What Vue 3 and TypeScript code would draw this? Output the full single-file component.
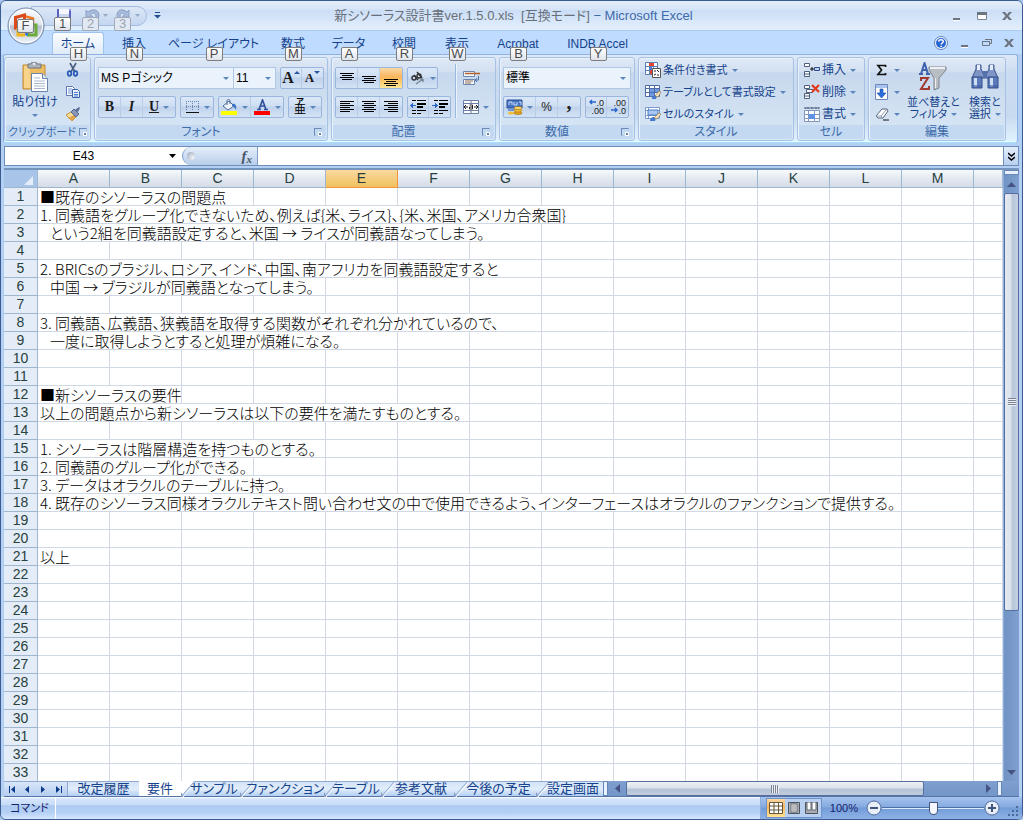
<script setup lang="ts">
import { ref } from 'vue'

interface RibbonTab { label: string; key: string }
interface SheetRow { text: string; span: number }

const ribbonTabs: RibbonTab[] = [
  { label: 'ホーム', key: 'H' },
  { label: '挿入', key: 'N' },
  { label: 'ページ レイアウト', key: 'P' },
  { label: '数式', key: 'M' },
  { label: 'データ', key: 'A' },
  { label: '校閲', key: 'R' },
  { label: '表示', key: 'W' },
  { label: 'Acrobat', key: 'B' },
  { label: 'INDB Accel', key: 'Y' },
]
const activeTab = ref('ホーム')

const columns = ['A', 'B', 'C', 'D', 'E', 'F', 'G', 'H', 'I', 'J', 'K', 'L', 'M']
const selectedColumn = 'E'
const rowCount = 33

const content: Record<number, SheetRow> = {
  1: { text: '■既存のシソーラスの問題点', span: 3 },
  2: { text: '1. 同義語をグループ化できないため、例えば{米、ライス}、{米、米国、アメリカ合衆国}', span: 8 },
  3: { text: '   という2組を同義語設定すると、米国 → ライスが同義語なってしまう。', span: 7 },
  5: { text: '2. BRICsのブラジル、ロシア、インド、中国、南アフリカを同義語設定すると', span: 7 },
  6: { text: '   中国 → ブラジルが同義語となってしまう。', span: 4 },
  8: { text: '3. 同義語、広義語、狭義語を取得する関数がそれぞれ分かれているので、', span: 7 },
  9: { text: '   一度に取得しようとすると処理が煩雑になる。', span: 5 },
  12: { text: '■新シソーラスの要件', span: 2 },
  13: { text: '以上の問題点から新シソーラスは以下の要件を満たすものとする。', span: 6 },
  15: { text: '1. シソーラスは階層構造を持つものとする。', span: 4 },
  16: { text: '2. 同義語のグループ化ができる。', span: 3 },
  17: { text: '3. データはオラクルのテーブルに持つ。', span: 4 },
  18: { text: '4. 既存のシソーラス同様オラクルテキスト問い合わせ文の中で使用できるよう、インターフェースはオラクルのファンクションで提供する。', span: 12 },
  21: { text: '以上', span: 1 },
}
const blankCells = (row: number): number => columns.length + 1 - (content[row]?.span ?? 0)

const sheets = ['改定履歴', '要件', 'サンプル', 'ファンクション', 'テーブル', '参考文献', '今後の予定', '設定画面']
const activeSheet = ref('要件')

const cellName = ref('E43')
const formula = ref('')
const zoom = ref(100)

const verticalAlign = [
  { name: '上揃え', y: 3 },
  { name: '上下中央揃え', y: 6 },
  { name: '下揃え', y: 9 },
]
const horizontalAlign = [
  { name: '左揃え', anchor: 0 },
  { name: '中央揃え', anchor: 2 },
  { name: '右揃え', anchor: 4 },
]
</script>

<template>
  <div class="window">
    <header class="titlebar">
      <div class="quick">
        <button class="qbtn" aria-label="上書き保存">
          <svg width="16" height="16" viewBox="0 0 16 16"><path d="M1 1h14v14H1z" fill="#5b62c4" /><path d="M3 1h10v8H3z" fill="#f4f7ff" /><path d="M3 6h10v3H3z" fill="#c9d5ee" /><path d="M4 11h8v4H4z" fill="#31388c" /><path d="M13 1h2v2h-2z" fill="#8f96e6" /></svg>
          <kbd class="tip">1</kbd>
        </button>
        <button class="qbtn faded" aria-label="元に戻す">
          <svg width="24" height="16" viewBox="0 0 24 16"><path d="M2 2v7h7L6.500 6.500C9 4 12 5 12 8s-2 4-4 6c5-1 7-4 7-7 0-5-6-7-11-3z" fill="#a9bbda" stroke="#8aa1c8" /><path d="M19 6h5l-2.500 3z" fill="#97a8c4" /></svg>
          <kbd class="tip">2</kbd>
        </button>
        <button class="qbtn faded" aria-label="やり直し">
          <svg width="24" height="16" viewBox="0 0 24 16"><path d="M13 2v7H6l2.500-2.500C6 4 4 5 4 8s1 4 3 6C3 13 1 10 1 7c0-5 5-7 10-3z" fill="#a9bbda" stroke="#8aa1c8" /><path d="M19 6h5l-2.500 3z" fill="#97a8c4" /></svg>
          <kbd class="tip">3</kbd>
        </button>
      </div>
      <button class="customize" aria-label="クイック アクセス ツール バーのユーザー設定">
        <svg width="7" height="7" viewBox="0 0 7 7"><path d="M1 0h5v1H1zM0 3h7L3.500 6.500z" fill="#24518f" /></svg>
      </button>
      <h1 class="title">新シソーラス設計書ver.1.5.0.xls&nbsp; [互換モード] <span>− Microsoft Excel</span></h1>
      <div class="controls">
        <button aria-label="最小化"><svg width="10" height="12" viewBox="0 0 10 12"><path d="M1 8h7v2H1z" fill="#6c7480" /><path d="M1 10h7v1H1z" fill="#fff" /></svg></button>
        <button aria-label="最大化"><svg width="10" height="12" viewBox="0 0 10 12"><path d="M.500 2.500h9v7h-9z" fill="#fff" stroke="#7c8592" /><path d="M0 2h10v3H0z" fill="#6c7480" /></svg></button>
        <button aria-label="閉じる"><svg width="10" height="12" viewBox="0 0 10 12"><path d="M0 2h3l2 2.500L7 2h3L6.500 6 10 10H7L5 7.500 3 10H0l3.500-4z" fill="#6c7480" /></svg></button>
      </div>
    </header>

    <nav class="tabrow">
      <div class="tabs" role="tablist">
        <button
          v-for="tab in ribbonTabs"
          :key="tab.key"
          role="tab"
          class="tab"
          :class="{ active: tab.label === activeTab }"
          :aria-selected="tab.label === activeTab"
          @click="activeTab = tab.label"
        >
          {{ tab.label }}<kbd class="tip">{{ tab.key }}</kbd>
        </button>
      </div>
      <div class="controls doc">
        <button aria-label="ヘルプ">
          <svg width="14" height="14" viewBox="0 0 14 14"><circle cx="7" cy="7" r="6.500" fill="#f4f9ff" stroke="#6484b8" /><circle cx="7" cy="7" r="5" fill="#2867d2" /><path d="M4.700 5.600C4.700 3 9.300 3 9.300 5.500 9.300 7 7.200 7 7.200 8.600M7.200 9.800v1.300" stroke="#fff" stroke-width="1.500" fill="none" /></svg>
        </button>
        <button aria-label="ブックを最小化"><svg width="10" height="12" viewBox="0 0 10 12"><path d="M1 8h7v2H1z" fill="#6c7480" /><path d="M1 10h7v1H1z" fill="#fff" /></svg></button>
        <button aria-label="ブックを元に戻す"><svg width="10" height="12" viewBox="0 0 10 12"><path d="M3.500 2.500h6v4H8M.500 4.500h7v4h-7z" fill="none" stroke="#6c7480" /><path d="M0 4h8v1H0zM3 2h7v1H3z" fill="#6c7480" /></svg></button>
        <button aria-label="ブックを閉じる"><svg width="10" height="12" viewBox="0 0 10 12"><path d="M0 2h3l2 2.500L7 2h3L6.500 6 10 10H7L5 7.500 3 10H0l3.500-4z" fill="#6c7480" /></svg></button>
      </div>
    </nav>

    <button class="office" aria-label="Office ボタン">
      <svg width="38" height="38" viewBox="0 0 38 38">
        <defs>
          <linearGradient id="orb" x1="0" y1="0" x2="0" y2="1"><stop offset="0" stop-color="#fafcff" /><stop offset=".45" stop-color="#dfe5ee" /><stop offset=".52" stop-color="#b4bfd0" /><stop offset="1" stop-color="#f1f6fc" /></linearGradient>
        </defs>
        <circle cx="19" cy="19" r="18" fill="url(#orb)" stroke="#7387a9" />
        <circle cx="19" cy="19" r="16.500" fill="none" stroke="#fff" />
        <path d="M8.500 10.500l9-2.500v12l-9 1z" fill="none" stroke="#dc4a1c" stroke-width="3" />
        <path d="M19 9.500l7 2v9" fill="none" stroke="#ee7a28" stroke-width="2.500" />
        <path d="M11 21v7h7" fill="none" stroke="#f3b51c" stroke-width="3" />
        <path d="M21 18h8v10h-8z" fill="none" stroke="#6aab3c" stroke-width="3" />
        <path d="M18 22v6l3 1v-7z" fill="#3c78cf" />
      </svg>
      <kbd class="tip">F</kbd>
    </button>

    <section class="ribbon" aria-label="リボン">
      <div class="group clip">
        <div class="body">
          <button class="paste">
            <svg width="28" height="31" viewBox="0 0 28 31">
              <path d="M2 3h22v24H2z" fill="#eebd62" stroke="#c18b35" /><path d="M3 4h6v22H3z" fill="#f7d38b" />
              <path d="M7 2h3c0-3 6-3 6 0h4v4H7z" fill="#aeb4bd" stroke="#6f757f" /><circle cx="13" cy="2" r="1" fill="#fff" />
              <path d="M10.500 11.500h11l5 5v13h-16z" fill="#fff" stroke="#6b82ad" /><path d="M21.500 11.500v5h5" fill="#dce7f6" stroke="#6b82ad" />
              <path d="M13 16h6M13 19h11M13 21.500h11M13 24h11M13 26.500h11" stroke="#a9b8d2" />
            </svg>
            <span>貼り付け</span>
            <i class="arrow"></i>
          </button>
          <div class="stack">
            <button aria-label="切り取り"><svg width="16" height="16" viewBox="0 0 16 16"><path d="M5 1l5 9M11 1L6 10" stroke="#49607f" stroke-width="1.600" /><ellipse cx="4.500" cy="11.500" rx="1.800" ry="2.300" fill="none" stroke="#2757b5" stroke-width="1.700" /><ellipse cx="10.500" cy="11.500" rx="1.800" ry="2.300" fill="none" stroke="#2757b5" stroke-width="1.700" /></svg></button>
            <button aria-label="コピー"><svg width="16" height="16" viewBox="0 0 16 16"><path d="M1.500 2.500h6l2 2v7h-8z" fill="#fff" stroke="#5777b5" /><path d="M3 5h4M3 7h4M3 9h4" stroke="#6b94d6" /><path d="M7.500 5.500h5l2 2v6h-7z" fill="#e9f1fd" stroke="#3d61a8" /><path d="M9 8.500h4M9 10.500h4M9 12h4" stroke="#4b7dcf" /></svg></button>
            <button aria-label="書式のコピー"><svg width="16" height="16" viewBox="0 0 16 16"><path d="M1 9l5-3 5 5-4 4z" fill="#f5dd98" stroke="#c5933e" /><path d="M3 12l4 3 4-4-2-2z" fill="#e0a44c" /><path d="M6 6l3-3 5 5-3 3z" fill="#8897ba" stroke="#53668f" /><path d="M10 4l4-3 1 1-2 4z" fill="#596b95" /></svg></button>
          </div>
        </div>
        <footer>クリップボード<button class="launch" aria-label="クリップボードの表示"></button></footer>
      </div>

      <div class="group font">
        <div class="body rows">
          <div class="line">
            <div class="combos">
              <span class="combo face"><select aria-label="フォント"><option>MS Pゴシック</option></select><i class="arrow"></i></span>
              <span class="combo size"><select aria-label="フォント サイズ"><option>11</option></select><i class="arrow"></i></span>
            </div>
            <div class="btns">
              <button class="w22 serif big" aria-label="フォント サイズの拡大">A<svg width="6" height="4" viewBox="0 0 6 4"><path d="M0 3h6L3 0z" fill="#2a57a4" /></svg></button>
              <button class="w22 serif small" aria-label="フォント サイズの縮小">A<svg width="6" height="4" viewBox="0 0 6 4"><path d="M0 0h6L3 3z" fill="#2a57a4" /></svg></button>
            </div>
          </div>
          <div class="line">
            <div class="btns">
              <button class="w23 serif"><b>B</b></button>
              <button class="w23 serif"><i class="ital">I</i></button>
              <button class="w34 serif"><u>U</u><i class="arrow"></i></button>
            </div>
            <div class="btns">
              <button class="w34" aria-label="罫線"><svg width="16" height="16" viewBox="0 0 16 16"><path d="M2 2.500h13M2 7.500h13M2.500 2v10M8.500 2v10M14.500 2v10" stroke="#6883ad" stroke-dasharray="1 1" /><path d="M2 13h13v1H2z" fill="#111" /></svg><i class="arrow"></i></button>
            </div>
            <div class="btns">
              <button class="w33" aria-label="塗りつぶしの色"><svg width="17" height="16" viewBox="0 0 17 16"><path d="M2 7l6-5 5 5-6 4z" fill="#eef4fc" stroke="#526b94" /><path d="M6 6V2c0-2 3-2 3 0v3" fill="none" stroke="#526b94" /><path d="M11 5c3-1 5 1 4 6-1-2-2-3-4-4z" fill="#3b73c8" /><path d="M0 12h16v4H0z" fill="#ff0" /></svg><i class="arrow"></i></button>
              <button class="w33" aria-label="フォントの色"><svg width="17" height="16" viewBox="0 0 17 16"><path d="M3 10.500h4M10 10.500h4M5 10.500L8.500 1l3.500 9.500M6.200 7h5" fill="none" stroke="#35539c" stroke-width="1.700" /><path d="M0 12h16v4H0z" fill="#f00" /></svg><i class="arrow"></i></button>
            </div>
            <div class="btns">
              <button class="w34 ruby" aria-label="ふりがなの表示"><ruby>亜<rt>ア</rt></ruby><i class="arrow"></i></button>
            </div>
          </div>
        </div>
        <footer>フォント<button class="launch" aria-label="フォントの設定"></button></footer>
      </div>

      <div class="group align">
        <div class="body split">
          <div class="rows">
            <div class="line">
              <div class="btns">
                <button v-for="(item, i) in verticalAlign" :key="item.name" class="w23" :class="{ pressed: i === 2 }" :aria-label="item.name">
                  <svg width="14" height="16" viewBox="0 0 14 16" shape-rendering="crispEdges"><path :d="`M0 ${item.y}h14v1H0zM2 ${item.y + 2}h10v1H2zM0 ${item.y + 4}h14v1H0zM2 ${item.y + 6}h10v1H2z`" fill="#000" /></svg>
                </button>
              </div>
              <div class="btns">
                <button class="w31" aria-label="方向"><svg width="16" height="16" viewBox="0 0 16 16"><g fill="none" stroke="#333" stroke-width="1.400"><circle cx="4" cy="8" r="2" /><path d="M4 5l4 5M7 2l5 6" /><circle cx="9" cy="6" r="2" /></g><path d="M6 14l7-5M13 9h-3M13 9v3" stroke="#7b8798" stroke-width="1.400" fill="none" /></svg><i class="arrow"></i></button>
              </div>
            </div>
            <div class="line">
              <div class="btns">
                <button v-for="item in horizontalAlign" :key="item.name" class="w23" :aria-label="item.name">
                  <svg width="14" height="14" viewBox="0 0 14 14" shape-rendering="crispEdges"><path :d="`M0 1h14v1H0zM${item.anchor} 3h10v1H${item.anchor}zM0 5h14v1H0zM${item.anchor} 7h10v1H${item.anchor}zM0 9h14v1H0zM${item.anchor} 11h10v1H${item.anchor}z`" fill="#000" /></svg>
                </button>
              </div>
              <div class="btns">
                <button class="w22" aria-label="インデントを減らす"><svg width="16" height="16" viewBox="0 0 16 16" shape-rendering="crispEdges"><path d="M2 1h4v1H2zM7 1h9v1H7zM7 4h9v2H7zM7 7h6v2H7zM2 11h4v1H2zM7 11h9v1H7zM2 14h4v1H2zM7 14h4v1H7z" fill="#000" /><path d="M0 6h1V5h1V4h1v2h3v1H3v2H2V8H1V7H0z" fill="#2b65c8" /></svg></button>
                <button class="w22" aria-label="インデントを増やす"><svg width="16" height="16" viewBox="0 0 16 16" shape-rendering="crispEdges"><path d="M2 1h4v1H2zM7 1h9v1H7zM7 4h9v2H7zM7 7h6v2H7zM2 11h4v1H2zM7 11h9v1H7zM2 14h4v1H2zM7 14h4v1H7z" fill="#000" /><path d="M6 6H5V5H4V4H3v2H0v1h3v2h1V8h1V7h1z" fill="#2b65c8" /></svg></button>
              </div>
            </div>
          </div>
          <div class="rule"></div>
          <div class="rows plain">
            <button aria-label="折り返して全体を表示する"><svg width="17" height="16" viewBox="0 0 17 16"><path d="M.500 1.500h11v5H.500zM.500 9.500h11v5H.500z" fill="#f5f9ff" stroke="#7087ad" /><path d="M2 3.500h15" stroke="#b5632b" stroke-width="1.500" /><path d="M2 11h8M2 13h6" stroke="#8f6d52" /><path d="M15.500 6v4h-3M14 8l-2 2 2 2" fill="none" stroke="#4770a9" /></svg></button>
            <button aria-label="セルを結合して中央揃え"><svg width="17" height="16" viewBox="0 0 17 16"><path d="M.500 1.500h15v13H.500zM.500 4.500h15M.500 11.500h15M8 1v3M8 12v3" fill="#fff" stroke="#6a7fa5" /><path d="M1 8h4M15 8h-4M3 6L1 8l2 2M13 6l2 2-2 2" fill="none" stroke="#222" /><path d="M6.500 6h3v4h-3V8h3" fill="none" stroke="#222" /></svg><i class="arrow"></i></button>
          </div>
        </div>
        <footer>配置<button class="launch" aria-label="配置の設定"></button></footer>
      </div>

      <div class="group number">
        <div class="body rows">
          <div class="line">
            <span class="combo wide"><select aria-label="表示形式"><option>標準</option></select><i class="arrow"></i></span>
          </div>
          <div class="line">
            <div class="btns">
              <button class="w33" aria-label="通貨表示形式"><svg width="17" height="16" viewBox="0 0 17 16"><path d="M1 1h15v8H1z" fill="#4573c4" stroke="#2b4e94" /><path d="M3 6V3h3v3M8 3v3h3V3M13 3h2v3" fill="none" stroke="#cfe0fa" /><path d="M2 10h7v2H2z" fill="#6f95da" /><ellipse cx="12" cy="14" rx="4" ry="1.600" fill="#e7a51f" stroke="#9b6e13" stroke-width=".6" /><ellipse cx="12" cy="11.500" rx="4" ry="1.600" fill="#f4bc35" stroke="#9b6e13" stroke-width=".6" /><ellipse cx="12" cy="9" rx="4" ry="1.600" fill="#ffd868" stroke="#9b6e13" stroke-width=".6" /><ellipse cx="5" cy="14" rx="3" ry="1.500" fill="#f2bd3b" /></svg><i class="arrow"></i></button>
              <button class="w23 percent">%</button>
              <button class="w23 comma">,</button>
            </div>
            <div class="btns">
              <button class="w22 dec" aria-label="小数点以下の表示桁数を増やす"><span><svg width="7" height="6" viewBox="0 0 7 6"><path d="M7 3H1M3 1L1 3l2 2" stroke="#2b65c8" stroke-width="1.500" fill="none" /></svg>.0</span><span>.00</span></button>
              <button class="w22 dec" aria-label="小数点以下の表示桁数を減らす"><span>.00</span><span><svg width="7" height="6" viewBox="0 0 7 6"><path d="M0 3h6M4 1l2 2-2 2" stroke="#2b65c8" stroke-width="1.500" fill="none" /></svg>.0</span></button>
            </div>
          </div>
        </div>
        <footer>数値<button class="launch" aria-label="数値の設定"></button></footer>
      </div>

      <div class="group styles">
        <div class="body list">
          <button><svg width="16" height="16" viewBox="0 0 16 16"><path d="M.500.500h12v12H.500zM.500 4.500h12M.500 8.500h12M4.500.500v12M8.500.500v12" fill="#fff" stroke="#5c7dba" /><path d="M4 1h5v3H4zM5 8h3v4H5z" fill="#e3462c" /><path d="M4 5h3v3H4z" fill="#4a79cc" /><path d="M7.500 6.500h8v9h-8z" fill="#fff" stroke="#555" /><path d="M9 9h2M12 8l2 2M9 13l2-1M12 13h2" stroke="#222" /></svg>条件付き書式<i class="arrow"></i></button>
          <button><svg width="16" height="16" viewBox="0 0 16 16"><path d="M.500 1.500h14v11H.500zM.500 4.500h14M.500 8.500h14M4.500 1.500v11M9.500 1.500v11" fill="#fff" stroke="#4e6ba1" /><path d="M5 5h4v3H5zM10 5h4v3h-4zM5 9h4v3H5z" fill="#6f9de5" /><path d="M7 15c0-4 3-4 5-3l-1 3z" fill="#3e78d1" /><path d="M10 12l4-5 2 1-3 5z" fill="#f7e5bd" stroke="#866a3b" stroke-width=".6" /></svg>テーブルとして書式設定<i class="arrow"></i></button>
          <button><svg width="16" height="16" viewBox="0 0 16 16"><path d="M.500 1.500h14v11H.500zM.500 4.500h14M.500 9.500h14M3.500 1.500v11" fill="#fff" stroke="#7b99ce" /><path d="M3 4h10v5H3z" fill="#a9c7f4" stroke="#4b79c5" /><path d="M5 15c0-4 4-5 6-3l-1 3z" fill="#3e78d1" /><path d="M9 12l5-5 2 1-4 5z" fill="#f7e5bd" stroke="#866a3b" stroke-width=".6" /></svg>セルのスタイル<i class="arrow"></i></button>
        </div>
        <footer>スタイル</footer>
      </div>

      <div class="group cells">
        <div class="body list">
          <button><svg width="16" height="16" viewBox="0 0 16 16"><path d="M.500 1.500h5v3h-5zM.500 9.500h5v5h-5zM.500 12h5" fill="#fff" stroke="#4d5f7c" /><path d="M10.500 5.500h5v3h-5z" fill="#bcd3f6" stroke="#2f4f8c" /><path d="M6 7h4M8 5v4" stroke="#111" /></svg>挿入<i class="arrow"></i></button>
          <button><svg width="16" height="16" viewBox="0 0 16 16"><path d="M.500 1.500h5v3h-5zM.500 9.500h5v5h-5zM.500 12h5M2.500 5.500h6v3h-6z" fill="#fff" stroke="#4d5f7c" /><path d="M8 1l7 7M15 1L8 8" stroke="#e2381d" stroke-width="2.200" /></svg>削除<i class="arrow"></i></button>
          <button><svg width="16" height="16" viewBox="0 0 16 16"><path d="M1 1v2M4 1v2M8 1v2M12 1v2M15 1v2M1 2h14" stroke="#4d5f7c" /><path d="M.500 4.500h15v11H.500zM.500 8.500h15M.500 12.500h15M4.500 4.500v11M10.500 4.500v11" fill="#fff" stroke="#8098c2" /><path d="M5 8h6v5H5z" fill="#5f93e6" /></svg>書式<i class="arrow"></i></button>
        </div>
        <footer>セル</footer>
      </div>

      <div class="group edit">
        <div class="body editing">
          <div class="list">
            <button aria-label="オート SUM"><svg width="14" height="14" viewBox="0 0 14 14"><path d="M10.500 4V2.500H3L6.500 7 3 11.500h7.500V10" fill="none" stroke="#111" stroke-width="1.700" /></svg><i class="arrow"></i></button>
            <button aria-label="フィル"><svg width="14" height="16" viewBox="0 0 14 16"><path d="M.500.500h12v15H.500z" fill="#fff" stroke="#6b86b9" /><path d="M1 1h11v3H1z" fill="#a9c3ec" /><path d="M5 5h3v4h3l-4.500 5L2 9h3z" fill="#2c6cdb" stroke="#184aa5" stroke-width=".6" /></svg><i class="arrow"></i></button>
            <button aria-label="クリア"><svg width="14" height="14" viewBox="0 0 14 14"><path d="M1 9l6-7h5l1 2-5 7H3z" fill="#fff" stroke="#53617a" /><path d="M1 9h5l2 2M6 9l6-7" fill="none" stroke="#8b9bb5" /><path d="M8 13h6" stroke="#111" /></svg><i class="arrow"></i></button>
          </div>
          <button class="large">
            <svg width="30" height="30" viewBox="0 0 30 30">
              <path d="M1 12h4M8 12h4M3 12L6.500 1 10 12M4 8h5" fill="none" stroke="#3f62ae" stroke-width="2" />
              <path d="M3 19v-3h7L3 27h8v-3" fill="none" stroke="#a23a34" stroke-width="2" />
              <path d="M11 5h17v3l-7 8v10l-5 2V16l-5-8z" fill="#b9bec5" stroke="#7e858f" /><path d="M12 5h15v2H12zM17 16h1v10h-1z" fill="#eef0f3" />
            </svg>
            <span>並べ替えと</span><span>フィルタ<i class="arrow"></i></span>
          </button>
          <button class="large">
            <svg width="30" height="30" viewBox="0 0 30 30">
              <path d="M6 3h5v4l3 6h2l3-6V3h5v4l4 9H2l4-9z" fill="#7f95c5" stroke="#3f568e" /><path d="M7 3h3v5H7zM20 3h3v5h-3z" fill="#e6edfa" /><path d="M13 9h4v7h-4z" fill="#5571ab" />
              <path d="M2 15h10v11H2zM18 15h10v11H18z" fill="#5c7bbb" stroke="#334c86" /><path d="M4 16h3v9H4zM20 16h3v9h-3z" fill="#cfddf5" /><path d="M2 23h10v3H2zM18 23h10v3H18z" fill="#435f9e" fill-opacity=".6" />
            </svg>
            <span>検索と</span><span>選択<i class="arrow"></i></span>
          </button>
        </div>
        <footer>編集</footer>
      </div>
    </section>

    <div class="formulabar">
      <div class="namebox">
        <input v-model="cellName" aria-label="名前ボックス">
        <button aria-label="名前の一覧"><svg width="7" height="4" viewBox="0 0 7 4"><path d="M0 0h7L3.500 4z" fill="#000" /></svg></button>
      </div>
      <div class="fx"><span class="knob"></span><button aria-label="関数の挿入"><em>f</em><sub>x</sub></button></div>
      <input v-model="formula" class="formula" aria-label="数式バー">
      <button class="expand" aria-label="数式バーの展開"><svg width="7" height="9" viewBox="0 0 7 9"><path d="M0 1l3.500 3L7 1M0 5l3.500 3L7 5" fill="none" stroke="#000" stroke-width="1.600" /></svg></button>
    </div>

    <main class="workbook">
      <div class="sheet">
        <table>
          <colgroup><col class="rowcol"><col v-for="c in columns" :key="c" class="datacol"><col></colgroup>
          <thead>
            <tr>
              <th class="corner"><svg width="9" height="9" viewBox="0 0 9 9"><path d="M9 0v9H0z" fill="#e6eefa" /></svg></th>
              <th v-for="c in columns" :key="c" scope="col" :class="{ selected: c === selectedColumn }">{{ c }}</th>
              <th></th>
            </tr>
          </thead>
          <tbody>
            <tr v-for="row in rowCount" :key="row">
              <th scope="row">{{ row }}</th>
              <td v-if="content[row]" :colspan="content[row].span">{{ content[row].text }}</td>
              <td v-for="n in blankCells(row)" :key="n"></td>
            </tr>
          </tbody>
        </table>
      </div>
      <div class="vscroll">
        <div class="splitter"></div>
        <button aria-label="上へスクロール"><svg width="9" height="5" viewBox="0 0 9 5"><path d="M0 5h9L4.500 0z" fill="#445381" /></svg></button>
        <div class="thumb"><i></i></div>
        <div class="rest"></div>
        <button aria-label="下へスクロール"><svg width="9" height="5" viewBox="0 0 9 5"><path d="M0 0h9L4.500 5z" fill="#445381" /></svg></button>
      </div>
    </main>

    <div class="sheetbar">
      <div class="sheetnav">
        <button aria-label="最初のシート"><svg width="7" height="7" viewBox="0 0 7 7"><path d="M0 0h1v7H0zM6 0v7L2 3.500z" fill="#0c3a8a" /></svg></button>
        <button aria-label="前のシート"><svg width="7" height="7" viewBox="0 0 7 7"><path d="M5 0v7L1 3.500z" fill="#0c3a8a" /></svg></button>
        <button aria-label="次のシート"><svg width="7" height="7" viewBox="0 0 7 7"><path d="M1 0v7l4-3.500z" fill="#0c3a8a" /></svg></button>
        <button aria-label="最後のシート"><svg width="7" height="7" viewBox="0 0 7 7"><path d="M6 0h1v7H6zM1 0v7l4-3.500z" fill="#0c3a8a" /></svg></button>
      </div>
      <div class="sheettabs" role="tablist">
        <button
          v-for="(name, i) in sheets"
          :key="name"
          role="tab"
          :aria-selected="name === activeSheet"
          :class="{ active: name === activeSheet }"
          @click="activeSheet = name"
        >
          <svg v-if="i > 1" width="14" height="16" viewBox="0 0 14 16"><path v-if="i === 2" d="M0 0h13L0 15z" fill="#fff" /><path d="M0 11v5h3z" fill="#8799b8" /><path d="M1 15L13 1" stroke="#8fa9d0" /><path d="M2 16L14 2" stroke="#fff" /></svg><span>{{ name }}</span>
        </button>
      </div>
      <div class="hscroll">
        <div class="splitter"></div>
        <button aria-label="左へスクロール"><svg width="5" height="9" viewBox="0 0 5 9"><path d="M5 0v9L0 4.500z" fill="#445381" /></svg></button>
        <div class="thumb"><i></i></div>
        <div class="rest"></div>
        <button aria-label="右へスクロール"><svg width="5" height="9" viewBox="0 0 5 9"><path d="M0 0v9l5-4.500z" fill="#445381" /></svg></button>
        <div class="splitter"></div>
      </div>
    </div>

    <footer class="status">
      <span class="mode">コマンド</span>
      <div class="view">
        <div class="modes">
          <button class="pressed" aria-label="標準"><svg width="14" height="12" viewBox="0 0 14 12"><path d="M.500.500h13v11H.500zM.500 4h13M.500 8h13M5 .500v11M9.500.500v11" fill="#fff" stroke="#66583b" /></svg></button>
          <button aria-label="ページ レイアウト"><svg width="12" height="12" viewBox="0 0 12 12"><path d="M.500.500h11v11H.500z" fill="#a9adb3" stroke="#4e555f" /><path d="M3 2h6v8H3z" fill="#fff" stroke="#5e6670" /><path d="M4 4h4M4 6h4M4 8h4" stroke="#777" /></svg></button>
          <button aria-label="改ページ プレビュー"><svg width="13" height="12" viewBox="0 0 13 12"><path d="M.500.500h12v11H.500z" fill="#a9adb3" stroke="#4e555f" /><path d="M2 0h4v8H2zM7 0h4v8H7z" fill="#fff" stroke="#5e6670" /></svg></button>
        </div>
        <output class="level">{{ zoom }}%</output>
        <button class="round" aria-label="縮小" @click="zoom -= 10"><svg width="16" height="16" viewBox="0 0 16 16"><circle cx="8" cy="8" r="7" fill="#e8eff9" stroke="#506b9a" /><path d="M4 7h8v2H4z" fill="#40557c" /></svg></button>
        <input v-model.number="zoom" type="range" min="10" max="190" aria-label="ズーム">
        <button class="round" aria-label="拡大" @click="zoom += 10"><svg width="16" height="16" viewBox="0 0 16 16"><circle cx="8" cy="8" r="7" fill="#e8eff9" stroke="#506b9a" /><path d="M4 7h8v2H4zM7 4h2v8H7z" fill="#40557c" /></svg></button>
        <svg class="grip" width="11" height="11" viewBox="0 0 11 11"><path d="M8 0h2v2H8zM4 4h2v2H4zM8 4h2v2H8zM0 8h2v2H0zM4 8h2v2H4zM8 8h2v2H8z" fill="#4b6998" /></svg>
      </div>
    </footer>
  </div>
</template>

<style>
body { margin: 0; background: #a9c6ef; }
</style>

<style scoped>
.window {
  position: relative;
  box-sizing: border-box;
  display: flex;
  flex-direction: column;
  height: 100vh;
  min-width: 1010px;
  border: 1px solid #3b5c90;
  border-radius: 6px;
  overflow: hidden;
  background: #b4cff4;
  color: #15428b;
  font: 12px/14px "Liberation Sans", "Noto Sans CJK JP", sans-serif;
  font-feature-settings: "palt";
}
button, input, select { font: inherit; font-feature-settings: inherit; color: inherit; margin: 0; padding: 0; border: 0; background: none; border-radius: 0; outline: 0; box-sizing: border-box; }
button { display: flex; align-items: center; justify-content: center; white-space: nowrap; }
svg { display: block; flex: none; }
.arrow { flex: none; width: 0; height: 0; border: solid transparent; border-width: 3px 3px 0; border-top-color: #5b86bd; }
.tip {
  position: absolute;
  box-sizing: border-box;
  width: 17px;
  height: 14px;
  border: 1px solid #7d7d7d;
  border-radius: 2px;
  background: linear-gradient(#fff, #dfe4ec);
  color: #4c4c4c;
  font: 13px/12px "Liberation Sans", sans-serif;
  text-align: center;
  z-index: 3;
}

.titlebar { display: flex; flex: none; align-items: center; height: 29px; padding: 0 10px 0 30px; background: linear-gradient(#e4edf9, #d6e5f8 28%, #cbdef6 32%, #e3effd); border-bottom: 1px solid #a9cdf1; }
.quick { display: flex; gap: 16px; box-sizing: border-box; width: 116px; height: 20px; padding: 1px 0 0 24px; border: 1px solid #a5bcdc; border-radius: 0 10px 10px 0; background: linear-gradient(#dce7f6, #c4d7f0); }
.qbtn { position: relative; width: 16px; height: 16px; justify-content: flex-start; }
.qbtn .tip { left: -2px; top: 9px; }
.qbtn svg { overflow: visible; }
.faded .tip { border-color: #a4a9b2; color: #a0a4ab; background: #dfe8f4; }
.faded { left: -4px; }
.customize { width: 20px; height: 20px; }
.title { flex: 1; margin: 0; padding-right: 92px; text-align: center; font-size: 13px; line-height: 20px; font-weight: 400; color: #696f79; white-space: nowrap; }
.title span { color: #3e6aaa; }
.controls { display: flex; gap: 15px; }

.tabrow { display: flex; flex: none; justify-content: space-between; height: 23px; padding: 0 5px 0 51px; background: #bfdbff; }
.tabs { display: grid; grid-template-columns: 52px 46px 99px 46px 51px 46px 46px 62px 83px; gap: 7px; padding-top: 1px; }
.tab { position: relative; z-index: 2; border: 1px solid transparent; border-bottom: 0; border-radius: 3px 3px 0 0; }
.tab.active { background: linear-gradient(#fafdff, #dfebf9); border-color: #9ec1ee; }
.tab .tip { left: 50%; margin-left: -8px; top: 14px; }
.controls.doc { align-items: center; gap: 12px; padding-right: 3px; }

.office { position: absolute; left: 6px; top: 6px; width: 38px; height: 38px; z-index: 4; }
.office .tip { left: 10px; top: 12px; }

.ribbon { display: flex; flex: none; gap: 3px; margin: 0 4px 0 2px; padding: 2px 0 1px; border: 1px solid #8db2e3; border-radius: 3px; border-bottom-color: #a4e0fb; background: linear-gradient(#dee9f7, #cbdcf0 20%, #c8daef 70%, #e2f3ff); box-shadow: inset 0 -1px 1px #e0ffff; }
.group { display: flex; flex: none; flex-direction: column; box-sizing: border-box; border: 1px solid #a6c1e4; border-radius: 3px; background: linear-gradient(#dfe9f6, #d3e0f1 17%, #c7d8ed 18%, #d9e8f6); box-shadow: inset 1px 1px 0 #eaf2fb; }
.clip { width: 87px; }
.font { width: 234px; }
.align { width: 165px; }
.number { width: 136px; }
.styles { width: 156px; }
.cells { width: 68px; }
.edit { width: 138px; }
.body { display: flex; box-sizing: border-box; height: 67px; }
.group footer { position: relative; height: 14px; margin: 0 1px 1px; border-radius: 0 0 2px 2px; background: #c2d9f1; color: #3e6aaa; text-align: center; line-height: 14px; white-space: nowrap; }
.align footer, .number footer, .font footer { padding-right: 20px; }
.clip footer { padding-right: 11px; font-size: 11px; }
.launch { position: absolute; right: 4px; top: 3px; width: 8px; height: 8px; border: 1px solid #6a8bb8; border-right-color: #b5cbe6; border-bottom-color: #b5cbe6; }
.clip .launch { right: 2px; }
.launch::after { content: ""; width: 4px; height: 4px; margin: 3px 0 0 3px; background: #5e80b2; border: 1px solid #fff; box-sizing: border-box; flex: none; }

.paste { flex-direction: column; justify-content: flex-start; width: 60px; padding-top: 4px; }
.paste span { line-height: 16px; margin-top: 1px; }
.paste .arrow { margin-top: 4px; }
.stack { display: flex; flex-direction: column; gap: 6px; padding-top: 4px; }

.rows { display: flex; flex-direction: column; gap: 7px; }
.body.rows, .split { padding: 9px 0 0 3px; }
.split { gap: 4px; }
.line { display: flex; gap: 4px; }
.btns { display: flex; box-sizing: border-box; height: 22px; border: 1px solid #9ab6dc; border-radius: 2px; background: linear-gradient(#dae7f7, #cfdff3 45%, #bfd2eb 50%, #d3e3f5); }
.btns button { gap: 4px; border-right: 1px solid #b9cde8; }
.btns button:last-child { border-right: 0; }
.w22 { width: 21px; }
.w23 { width: 22px; }
.w31 { width: 29px; }
.w33 { width: 32px; }
.w34 { width: 32px; }
.pressed { background: linear-gradient(#fbd9a6, #f9b55c 45%, #fcbf5f 55%, #fee597); }
.combos { display: flex; border: 1px solid #b0c7e5; height: 22px; box-sizing: border-box; background: #b0c7e5; gap: 1px; }
.combo { position: relative; display: flex; background: #eaf2fb; }
.combo select { appearance: none; width: 100%; padding-left: 2px; color: #000; }
.combo .arrow { position: absolute; right: 4px; top: 9px; pointer-events: none; }
.face { width: 134px; }
.size { width: 41px; }
.wide { width: 128px; height: 22px; box-sizing: border-box; border: 1px solid #b0c7e5; }
.serif { font: bold 14px/18px "Liberation Serif", serif; color: #1a1a1a; }
.ital { font-style: italic; }
.big { font-size: 16px; }
.small { font-size: 13px; }
.btns .big, .btns .small { gap: 0; }
.big svg, .small svg { margin-bottom: 10px; }
.ruby { font-size: 12px; color: #000; }
.ruby ruby { display: flex; flex-direction: column-reverse; line-height: 11px; align-items: center; }
.ruby rt { display: block; font-size: 8px; line-height: 7px; font-weight: 700; }
.rule { width: 1px; height: 54px; margin-top: -3px; background: #9ab9df; border-right: 1px solid #eaf2fb; }
.plain { gap: 13px; padding: 3px 0 0 2px; }
.plain button { gap: 3px; width: 31px; height: 16px; justify-content: flex-start; }
.percent { color: #222; }
.comma { font: bold 20px/10px "Liberation Serif", serif; color: #222; padding-bottom: 10px; }
.btns .dec { flex-direction: column; align-items: flex-end; gap: 0; padding-right: 2px; font-size: 9px; line-height: 8px; color: #222; }
.dec span { display: flex; }

.list { display: flex; flex-direction: column; align-items: flex-start; gap: 6px; padding: 4px 0 0 6px; }
.list button { height: 16px; gap: 4px; }
.list button svg { margin-right: -2px; }
.styles .list { font-size: 11px; }
.editing { gap: 7px; }
.editing .list button { gap: 7px; width: 25px; justify-content: flex-start; }
.large { flex-direction: column; justify-content: flex-start; padding-top: 4px; min-width: 36px; line-height: 12px; font-size: 11px; }
.large svg { margin-bottom: 4px; }
.large span { display: flex; align-items: center; gap: 4px; height: 12px; }

.formulabar { display: flex; flex: none; box-sizing: border-box; height: 20px; margin: 3px 3px 0; border: 1px solid #6b8fb9; background: #fff; color: #000; }
.namebox { display: flex; width: 177px; }
.namebox input { flex: 1; min-width: 0; text-align: center; }
.namebox button { width: 20px; }
.fx { display: flex; justify-content: space-between; align-items: center; width: 76px; box-sizing: border-box; padding: 0 5px 0 4px; border: 1px solid #7f9fc9; border-width: 0 1px 0 1px; border-radius: 10px 0 0 10px; background: linear-gradient(#e6effb, #b8cdeb); }
.knob { width: 8px; height: 8px; border-radius: 4px; background: radial-gradient(circle at 6px 6px, #f4f6f9, #9ba8bb); }
.fx button { font: 15px/16px "Liberation Serif", serif; color: #4a5568; }
.fx em { font-weight: 700; }
.fx sub { font: italic bold 11px/10px "Liberation Serif", serif; align-self: flex-end; }
.formula { flex: 1; min-width: 0; }
.expand { width: 15px; border-left: 1px solid #6b8fb9; background: linear-gradient(#e3eefc, #b9cfee); }

.workbook { display: flex; flex: 1; min-height: 0; margin: 2px 3px 0; border-top: 2px solid #7695bd; overflow: hidden; }
.sheet { flex: 1; min-width: 0; overflow: hidden; background: #fff; }
table { width: 100%; table-layout: fixed; border-collapse: separate; border-spacing: 0; }
.rowcol { width: 34px; }
.datacol { width: 72px; }
th, td { box-sizing: border-box; height: 18px; padding: 0; overflow: hidden; white-space: pre; border: solid #d0d7e5; border-width: 0 1px 1px 0; line-height: 17px; }
td { padding-left: 2px; font-family: "Noto Sans CJK JP", "Liberation Sans", sans-serif; font-size: 15px; font-weight: 300; color: #000; text-align: left; }
th { font-size: 14px; font-weight: 400; color: #27413e; background: #e4ecf7; border-color: #9eb6ce; }
thead th { background: linear-gradient(#f8fafc, #e3e9f1 50%, #d5dce7); }
thead .corner { background: #a9c4e9; }
.corner svg { margin: 3px 0 0 20px; }
thead .selected { background: linear-gradient(#f9d99f, #f1c15f); border-color: #f29536; }

.vscroll { display: flex; flex-direction: column; box-sizing: border-box; width: 16px; border-left: 1px solid #8fb0dd; background: linear-gradient(90deg, #6f93c4, #7f9fcf); }
.vscroll button { height: 18px; flex: none; }
.splitter { flex: none; box-sizing: border-box; border: 1px solid #6487b8; background: #e8f1fd; }
.vscroll .splitter { height: 5px; }
.thumb { display: flex; align-items: center; justify-content: center; box-sizing: border-box; border: 1px solid #566f9f; border-radius: 2px; }
.vscroll .thumb { flex: 418; background: linear-gradient(90deg, #e3e8f0, #dbe2ec 45%, #b8c6db 55%, #c4cfe0); }
.vscroll .rest { flex: 153; }
.thumb i { width: 8px; height: 8px; background: repeating-linear-gradient(#7b8490 0 1px, #eef2f7 1px 2px); }

.sheetbar { display: flex; flex: none; height: 16px; margin: 0 3px; background: linear-gradient(#dbe8fa, #b4cdf0); border-bottom: 1px solid #5573a5; box-sizing: border-box; }
.sheetnav { display: grid; grid-template-columns: repeat(4, 1fr); width: 63px; padding: 0 1px; box-sizing: border-box; border-top: 1px solid #8fa9d0; }
.sheettabs { display: grid; grid-template-columns: 72px 42px 59px 84px 57px 73px 82px 67px; }
.sheettabs button { position: relative; justify-content: center; padding-left: 7px; border-top: 1px solid #8fa9d0; background: linear-gradient(#d4e3f7, #e1edfb 50%, #b4cff3); font-size: 13px; line-height: 14px; }
.sheettabs button:first-child { border-left: 1px solid #8fa9d0; padding: 0; }
.sheettabs .active { background: #fff; border-color: #fff; padding: 0; }
.sheettabs svg { position: absolute; left: 0; top: -1px; }
.sheettabs span { position: relative; }
.hscroll { display: flex; flex: 1; background: linear-gradient(#7f9fcf, #7395c8); }
.hscroll button { width: 18px; flex: none; }
.hscroll .splitter { width: 5px; }
.hscroll .splitter:last-child { margin-right: 17px; }
.hscroll .thumb { flex: 298; background: linear-gradient(#eef1f5, #dbe2ec 45%, #b5c3d7 55%, #c0ccdd); }
.hscroll .rest { flex: 55; }
.hscroll .thumb i { background: repeating-linear-gradient(90deg, #7b8490 0 1px, #eef2f7 1px 2px); }

.status { display: flex; flex: none; justify-content: space-between; height: 22px; color: #15226b; background: linear-gradient(#fff, #d5e5fb 8%, #c8dcf8 35%, #acc9f0 40%, #b4d0f5 70%, #d4e6fb); font-size: 11px; }
.mode { display: flex; align-items: center; padding: 0 6px 0 9px; border-right: 1px solid #fff; }
.view { display: flex; align-items: center; padding: 0 3px 0 5px; border-left: 1px solid #8dacd9; background: linear-gradient(#a5c3ee, #86abe0 45%, #739cd8 50%, #8db2e6); }
.modes { display: flex; height: 18px; border: 1px solid #6f93c9; background: #b9d0f1; }
.modes button { width: 18px; }
.level { margin: 0 8px; }
.round { width: 16px; height: 16px; }
.view input { appearance: none; width: 102px; height: 16px; background: linear-gradient(transparent 7px, #4c6ea6 7px 8px, #dce9fb 8px 9px, transparent 9px); }
.view input::-webkit-slider-thumb { appearance: none; width: 9px; height: 13px; background: #f3f7fd; border: 1px solid #40557c; border-radius: 1px 1px 5px 5px; }
.grip { margin-left: 8px; margin-top: 6px; }
</style>
